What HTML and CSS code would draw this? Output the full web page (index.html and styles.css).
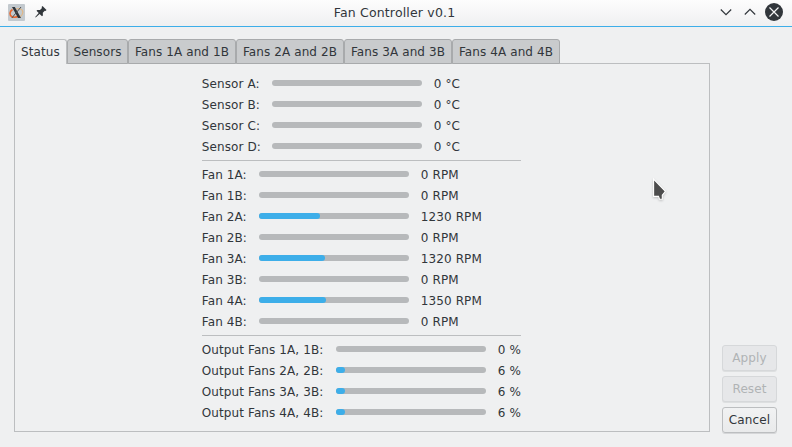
FILE: index.html
```html
<!DOCTYPE html>
<html lang="en">
<head>
<meta charset="utf-8">
<title>Fan Controller v0.1</title>
<link rel="stylesheet" href="styles.css">
</head>
<body>
<header class="titlebar">
  <div class="title-left">
    <svg class="app-icon" width="17" height="17" viewBox="0 0 17 17">
      <rect width="17" height="17" rx="1" fill="#c3c9ce"/>
      <path d="M4.500 5.500C1.300 7.500 1.200 11.500 4 12.800C6.500 13.800 9 13 11 11.500" fill="none" stroke="#e8652c" stroke-width="1.600"/>
      <path d="M8 5C11 4 15 5 14.800 8.500C14.600 10.500 13.300 12 12 12.700" fill="none" stroke="#dfb787" stroke-width="1.200"/>
      <path d="M4 3H6.800L13 14H10Z" fill="#30353a"/>
      <path d="M13 3L3.800 14" stroke="#4b4f53" stroke-width="1"/>
    </svg>
    <svg class="pin" width="12" height="12" viewBox="0 0 12 12">
      <path d="M7.500 0L11.500 4L10.500 5L9.800 4.800L7.800 6.800L7.900 9.500L7 10.300L4.600 8L.7 11.500L.2 11L3.700 7L1.500 4.800L2.300 3.900L5 4L7 2L6.600 1Z" fill="#31363b"/>
    </svg>
  </div>
  <h1 class="title">Fan Controller v0.1</h1>
  <div class="controls">
    <svg width="12" height="18" viewBox="0 0 12 18"><path d="M.8 6.500L6 11.700L11.200 6.500" fill="none" stroke="#31363b" stroke-width="1.200"/></svg>
    <svg width="12" height="18" viewBox="0 0 12 18"><path d="M.8 11.500L6 6.300L11.200 11.500" fill="none" stroke="#31363b" stroke-width="1.200"/></svg>
    <svg class="close" width="18" height="18" viewBox="0 0 18 18"><circle cx="9" cy="9" r="9" fill="#31363b"/><path d="M4.500 4.500L13.500 13.500M13.500 4.500L4.500 13.500" stroke="#f4f5f6" stroke-width="1.200"/></svg>
  </div>
</header>
<main class="content">
  <section class="tabview">
    <nav class="tabs">
      <span class="tab active">Status</span><span class="tab sensors">Sensors</span><span class="tab">Fans 1A and 1B</span><span class="tab">Fans 2A and 2B</span><span class="tab">Fans 3A and 3B</span><span class="tab">Fans 4A and 4B</span>
    </nav>
    <div class="panel">
      <div class="readings">
        <div class="group temp">
          <span class="label">Sensor A:</span><div class="bar"></div><span>0 °C</span>
          <span class="label">Sensor B:</span><div class="bar"></div><span>0 °C</span>
          <span class="label">Sensor C:</span><div class="bar"></div><span>0 °C</span>
          <span class="label">Sensor D:</span><div class="bar"></div><span>0 °C</span>
        </div>
        <div class="group fans">
          <span>Fan 1A:</span><div class="bar"></div><span>0 RPM</span>
          <span>Fan 1B:</span><div class="bar"></div><span>0 RPM</span>
          <span>Fan 2A:</span><div class="bar"><i style="width:61px"></i></div><span>1230 RPM</span>
          <span>Fan 2B:</span><div class="bar"></div><span>0 RPM</span>
          <span>Fan 3A:</span><div class="bar"><i style="width:66px"></i></div><span>1320 RPM</span>
          <span>Fan 3B:</span><div class="bar"></div><span>0 RPM</span>
          <span>Fan 4A:</span><div class="bar"><i style="width:67px"></i></div><span>1350 RPM</span>
          <span>Fan 4B:</span><div class="bar"></div><span>0 RPM</span>
        </div>
        <div class="group outputs">
          <span>Output Fans 1A, 1B:</span><div class="bar"></div><span>0 %</span>
          <span>Output Fans 2A, 2B:</span><div class="bar"><i style="width:9px"></i></div><span>6 %</span>
          <span>Output Fans 3A, 3B:</span><div class="bar"><i style="width:9px"></i></div><span>6 %</span>
          <span>Output Fans 4A, 4B:</span><div class="bar"><i style="width:9px"></i></div><span>6 %</span>
        </div>
      </div>
    </div>
  </section>
  <aside class="actions">
    <button class="btn" disabled>Apply</button>
    <button class="btn" disabled>Reset</button>
    <button class="btn">Cancel</button>
  </aside>
</main>
<svg class="cursor" width="20" height="28" viewBox="0 0 20 28">
  <path d="M3.600 2.200V19.400H8.500L9.500 22.300H12.300V18.300L15.400 14.300Z" fill="#4d4d4d" stroke="#fff" stroke-width="1.100"/>
</svg>
</body>
</html>
```

FILE: styles.css
```css
* { box-sizing: border-box; }

body {
  margin: 0;
  width: 792px;
  height: 447px;
  overflow: hidden;
  display: flex;
  flex-direction: column;
  background: #eff0f1;
  color: #31363b;
  font: 12px/15px "DejaVu Sans", sans-serif;
  letter-spacing: 0.1px;
}

.titlebar {
  height: 27px;
  display: grid;
  grid-template-columns: 100px 1fr 100px;
  background: linear-gradient(#fdfdfd, #eff0f1);
  border-bottom: 1px solid #3daee9;
}

.title-left { display: flex; align-items: flex-start; padding: 4px 0 0 8px; }
.pin { margin: 2px 0 0 10px; }

.title {
  margin: 0;
  padding: 5px 3px 0 0;
  text-align: center;
  font-size: 12.5px;
  font-weight: 400;
  letter-spacing: 0.17px;
}

.controls {
  display: flex;
  justify-content: flex-end;
  gap: 12px;
  padding: 3px 9px 0 0;
}
.close { margin-left: -3px; }

.content { flex: 1; display: flex; padding: 12px 15px 14px 14px; }
.tabview { width: 696px; display: flex; flex-direction: column; margin-bottom: 1px; }

.tabs { display: flex; height: 25px; margin-bottom: -1px; position: relative; }
.tab {
  width: 108px;
  padding-top: 5px;
  text-align: center;
  white-space: nowrap;
  background: #c9cbcd;
  border: 1px solid #a8aaac;
  border-radius: 3px 3px 0 0;
}
.tab.sensors { width: 61px; }
.tab.active {
  width: 53px;
  background: #eff0f1;
  border-color: #bcbec0;
  border-bottom: 0;
}

.panel {
  flex: 1;
  border: 1px solid #bcbec0;
  display: flex;
  justify-content: center;
  padding-top: 12px;
}

.readings { width: 319px; margin-right: 2px; }
.group {
  display: grid;
  grid-auto-rows: 15px;
  row-gap: 6px;
  column-gap: 12px;
  align-items: center;
  white-space: nowrap;
}
.group span { padding: 2px 0 0 0.3px; }
.temp { grid-template-columns: 58px 150px 1fr; }
.temp .label { text-align: right; }
.fans { grid-template-columns: 45px 150px 1fr; }
.outputs { grid-template-columns: 122px 150px 1fr; }
.group + .group { margin-top: 6px; padding-top: 6px; border-top: 1px solid #bcbec0; }

.bar { height: 6px; margin-bottom: 2px; border-radius: 3px; background: #b7b9bb; }
.bar i { display: block; height: 6px; border-radius: 3px; background: #3daee9; }

.actions {
  margin-left: auto;
  width: 55px;
  display: flex;
  flex-direction: column;
  justify-content: flex-end;
  gap: 5px;
}
.btn {
  height: 26px;
  padding: 0;
  font: inherit;
  letter-spacing: inherit;
  color: #31363b;
  background: linear-gradient(#f1f2f3, #e9eaeb);
  border: 1px solid #bcbec0;
  border-radius: 3px;
  box-shadow: 0 1px 0 #d5d6d8;
}
.btn:disabled {
  color: #b0b3b5;
  background: #e6e7e9;
  border-color: #d6d8da;
  box-shadow: 0 1px 0 #dddfe0;
}

.cursor {
  position: absolute;
  left: 650px;
  top: 177px;
  filter: drop-shadow(0 1px 1px rgba(0, 0, 0, 0.2));
}
```
